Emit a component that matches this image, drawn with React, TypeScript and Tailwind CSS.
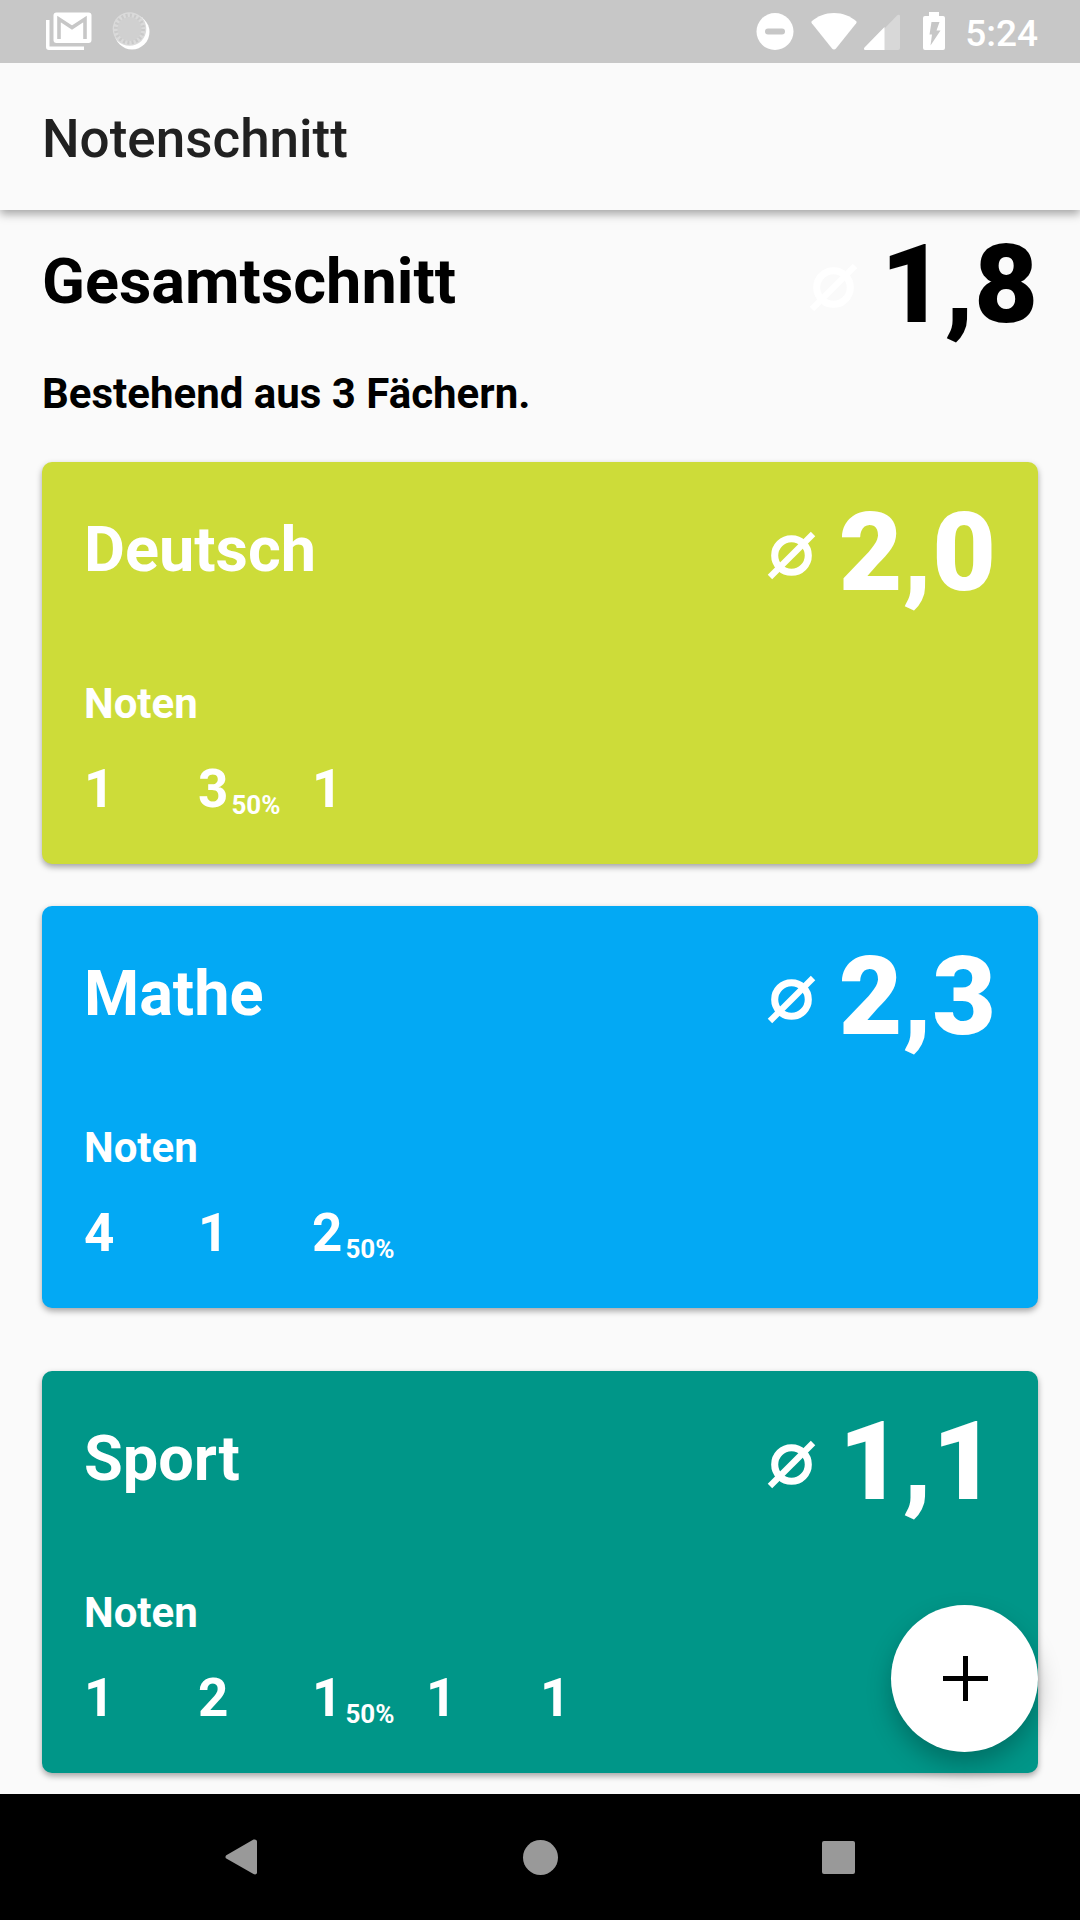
import { useState } from "react";
import clsx from "clsx";

interface Grade {
    value: string;
    weight?: string;
}

interface Subject {
    name: string;
    average: string;
    color: string;
    grades: Grade[];
}

const subjects: Subject[] = [
    {
        name: "Deutsch",
        average: "2,0",
        color: "bg-[#cddc39]",
        grades: [{ value: "1" }, { value: "3", weight: "50%" }, { value: "1" }],
    },
    {
        name: "Mathe",
        average: "2,3",
        color: "bg-[#03a9f4]",
        grades: [{ value: "4" }, { value: "1" }, { value: "2", weight: "50%" }],
    },
    {
        name: "Sport",
        average: "1,1",
        color: "bg-[#009688]",
        grades: [{ value: "1" }, { value: "2" }, { value: "1", weight: "50%" }, { value: "1" }, { value: "1" }],
    },
];

const AverageIcon = () => (
    <svg viewBox="0 0 24 24" className="mt-1.5 h-[63px] w-[63px] text-white" fill="none" stroke="currentColor" aria-hidden="true">
        <circle cx="12" cy="12" r="6.4" strokeWidth="2.7" />
        <path d="M3.8 20.2 20.2 3.8" strokeWidth="2.4" />
    </svg>
);

const StatusBar = () => (
    <div className="flex h-[63px] items-start justify-between bg-[#c7c7c7] pt-3 pr-[42px] pl-[46px] text-white">
        <div className="flex gap-5">
            <svg viewBox="0 0 46 38" className="h-[38px] w-[46px]" fill="currentColor" aria-hidden="true">
                <path d="M0 8h3.500v26.500H38V38H3a3 3 0 0 1-3-3z" />
                <rect x="7.500" y="0.500" width="38" height="30.500" rx="3" />
                <path d="M13 27V7l13 8.500L39 7v20" fill="none" stroke="#c7c7c7" strokeWidth="3.600" />
            </svg>
            <svg viewBox="0 0 38 38" className="h-[38px] w-[38px]" aria-hidden="true">
                <circle cx="20" cy="20" r="17.500" fill="#fff" />
                <circle cx="17.500" cy="17" r="16.800" fill="#dadada" />
                <circle cx="17.500" cy="17" r="13.500" fill="none" stroke="#cacaca" strokeWidth="4" strokeDasharray="2 2.240" />
                <circle cx="17.500" cy="17" r="12" fill="#d0d0d0" />
            </svg>
        </div>
        <div className="flex">
            <svg viewBox="0 0 38 38" className="mr-[17px] h-[38px] w-[38px]" fill="currentColor" aria-hidden="true">
                <circle cx="19" cy="19.5" r="18.500" />
                <rect x="9" y="16.500" width="20" height="6" rx="3" fill="#c7c7c7" />
            </svg>
            <svg viewBox="0 0 46 38" className="mr-[7px] h-[38px] w-[46px]" fill="currentColor" aria-hidden="true">
                <path d="M1 9C7 4 14 1 23 1s16 3 22 8c.8.7.8 1.4.2 2.200L25 36.500c-1.200 1.400-2.800 1.400-4 0L.8 11.200C.2 10.400.2 9.700 1 9z" />
            </svg>
            <svg viewBox="0 0 36 38" className="mr-[23px] h-[38px] w-[36px]" fill="currentColor" aria-hidden="true">
                <path d="M36 4v32a2 2 0 0 1-2 2H20V17L33 3.500c1-1 3-1 3 .5z" opacity=".3" />
                <path d="M20.500 15v23H1.500c-1.500 0-2-1.500-1-2.500z" />
            </svg>
            <svg viewBox="0 0 22 38" className="mr-[20px] h-[38px] w-[22px]" fill="currentColor" aria-hidden="true">
                <path d="M6 0h10v4h4a2 2 0 0 1 2 2v30a2 2 0 0 1-2 2H2a2 2 0 0 1-2-2V6a2 2 0 0 1 2-2h4z" />
                <path d="M8.500 10h8l-3 8.500h4L7.500 33.500 9 22.500H6.500z" fill="#c7c7c7" />
            </svg>
            <span className="text-[37px] leading-[43px] font-medium">5:24</span>
        </div>
    </div>
);

const SubjectCard = ({ subject }: { subject: Subject }) => (
    <article
        className={clsx(
            "rounded-[10px] px-[42px] pt-[26px] pb-[44px] text-white shadow-[0_3px_6px_rgba(0,0,0,0.35)] last:mt-[21px]",
            subject.color
        )}
    >
        <div className="flex items-center justify-between">
            <h2 className="pb-1.5 text-[63px] leading-[74px] font-bold">{subject.name}</h2>
            <div className="flex items-center gap-4">
                <AverageIcon />
                <span className="text-[110px] leading-[129px] font-black">{subject.average}</span>
            </div>
        </div>
        <h3 className="mt-[62px] text-[42px] leading-[49px] font-bold">Noten</h3>
        <ul className="mt-[30px] flex flex-wrap">
            {subject.grades.map((grade, index) => (
                <li key={index} className="flex w-[114px] items-end gap-[3px] text-[53px] leading-[62px] font-bold">
                    {grade.value}
                    {grade.weight && <span className="text-[26px] leading-[30px]">{grade.weight}</span>}
                </li>
            ))}
        </ul>
    </article>
);

const App = () => {
    const [list] = useState<Subject[]>(subjects);

    return (
        <div className="flex min-h-screen flex-col bg-[#fafafa] font-[Roboto,sans-serif]">
            <StatusBar />

            {/* App bar */}
            <header className="z-10 flex h-[147px] items-center bg-[#fafafa] px-[42px] pt-1 shadow-[0_4px_9px_rgba(0,0,0,0.35)] [clip-path:inset(0_0_-20px_0)]">
                <h1 className="text-[53px] leading-[62px] font-medium text-[#212121]">Notenschnitt</h1>
            </header>

            <main className="relative flex-1 px-[42px] pt-[10px] pb-[21px]">
                {/* Overall average */}
                <section className="text-black">
                    <div className="flex items-center justify-between">
                        <h2 className="pb-1.5 text-[63px] leading-[74px] font-bold">Gesamtschnitt</h2>
                        <div className="flex items-center gap-4">
                            <AverageIcon />
                            <span className="text-[110px] leading-[129px] font-black">1,8</span>
                        </div>
                    </div>
                    <p className="mt-5 text-[42px] leading-[49px] font-bold">Bestehend aus {list.length} Fächern.</p>
                </section>

                <div className="mt-[44px] flex flex-col gap-[42px]">
                    {list.map((subject) => (
                        <SubjectCard key={subject.name} subject={subject} />
                    ))}
                </div>

                <button
                    type="button"
                    aria-label="Fach hinzufügen"
                    className="absolute right-[42px] bottom-[42px] flex h-[147px] w-[147px] items-center justify-center rounded-full bg-white text-black shadow-[0_12px_24px_rgba(0,0,0,0.25)]"
                >
                    <svg viewBox="0 0 47 47" className="h-[47px] w-[47px]" stroke="currentColor" strokeWidth="5" aria-hidden="true">
                        <path d="M24.500 1v45M2 23.500h45" />
                    </svg>
                </button>
            </main>

            {/* System navigation */}
            <nav className="flex h-[126px] bg-black px-[92px] text-[#999999]">
                <button type="button" aria-label="Zurück" className="flex flex-1 items-center justify-center">
                    <svg viewBox="0 0 32 36" className="h-[36px] w-[32px]" fill="currentColor" aria-hidden="true">
                        <path d="M28.500.6C30 0 32 .6 32 2.500v31c0 1.900-2 2.500-3.500 1.500L1.300 19.600C.2 18.800.2 17 1.300 16.200z" />
                    </svg>
                </button>
                <button type="button" aria-label="Startseite" className="flex flex-1 items-center justify-center">
                    <span className="h-[35px] w-[35px] rounded-full bg-current" />
                </button>
                <button type="button" aria-label="Übersicht" className="flex flex-1 items-center justify-center">
                    <span className="h-[33px] w-[33px] rounded-[2px] bg-current" />
                </button>
            </nav>
        </div>
    );
};

export default App;
